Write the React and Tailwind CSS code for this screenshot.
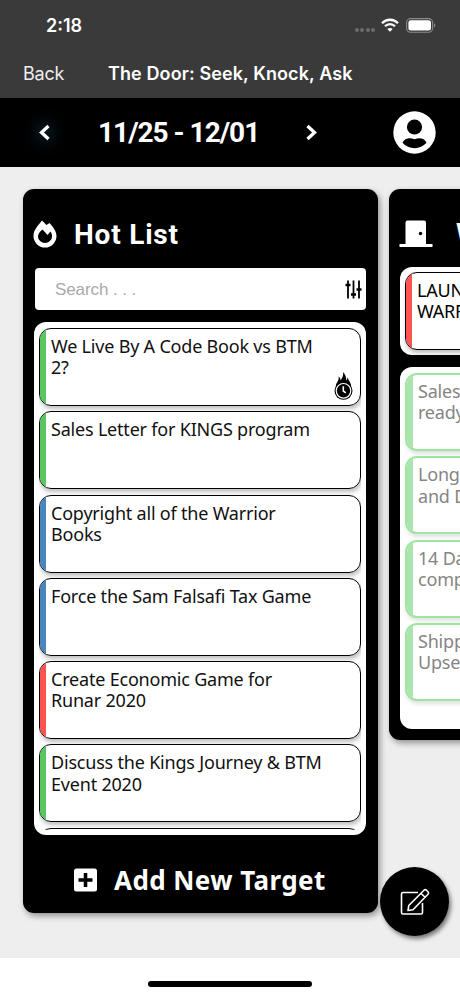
const targets = [
  { title: "We Live By A Code Book vs BTM 2?", color: "green", hot: true },
  { title: "Sales Letter for KINGS program", color: "green" },
  { title: "Copyright all of the Warrior Books", color: "blue" },
  { title: "Force the Sam Falsafi Tax Game", color: "blue" },
  { title: "Create Economic Game for Runar 2020", color: "red" },
  { title: "Discuss the Kings Journey & BTM Event 2020", color: "green" },
  { title: "", color: "green" },
];

const doneTargets = [
  ["Sales", "ready"],
  ["Long", "and Da"],
  ["14 Day", "compl"],
  ["Shipp", "Upsell"],
];

const stripes = {
  green: "bg-[#5bc65f]",
  blue: "bg-[#4a86bd]",
  red: "bg-[#ff5350]",
};

function StatusBar() {
  return (
    <div className="flex h-[50px] items-center pl-[46px] pr-[24px] text-white">
      <span className="font-['Inter'] text-[18px] font-semibold">2:18</span>
      <div className="ml-auto flex gap-[1.5px] pt-[9px]">
        {[0, 1, 2, 3].map((n) => (
          <span key={n} className="h-[4px] w-[4px] rounded-full bg-[#6c6c6c]" />
        ))}
      </div>
      <svg className="ml-[6px]" width="18" height="14" viewBox="0 0 18 14" fill="none" stroke="#fff" strokeWidth="2.3">
        <path d="M1 5.2C5.4.6 12.6.6 17 5.2" />
        <path d="M4 8.3c2.8-2.9 7.2-2.9 10 0" />
        <path d="M9 13.7 6.3 11c1.5-1.5 3.9-1.5 5.4 0z" fill="#fff" stroke="none" />
      </svg>
      <svg className="ml-[7px]" width="30" height="15" viewBox="0 0 30 15">
        <rect x="0.6" y="0.6" width="26" height="13.6" rx="4" fill="none" stroke="#8c8c8c" strokeWidth="1.1" />
        <rect x="2.4" y="2.3" width="22.6" height="10.2" rx="2.5" fill="#fff" />
        <path d="M28 5.2c1.7.8 1.7 3.6 0 4.4z" fill="#8c8c8c" />
      </svg>
    </div>
  );
}

function HotTimer() {
  return (
    <svg className="absolute right-[7px] bottom-[5px]" width="19" height="28" viewBox="0 0 19 28">
      <path d="M2 15C.8 11.5 5.5 9.5 4.6 4.5c1.3 1 1.9 2.3 2 4C8.3 6 9.7 3.5 9 0c2.5 2.5 3.3 5 3.3 8.5.8-.8 1.3-2 1.2-3.5 1.2 4.5 4.2 6 3.5 10.5z" />
      <circle cx="9.5" cy="18.8" r="9" />
      <circle cx="9.5" cy="18.8" r="7.3" fill="none" stroke="#fff" strokeWidth="1.2" />
      <path d="M9.3 14.2v4.8l2.5 1.8" fill="none" stroke="#fff" strokeWidth="1.6" />
    </svg>
  );
}

function Target({ title, color, hot }) {
  return (
    <div className="relative flex h-[78px] shrink-0 overflow-hidden rounded-[12px] border border-black bg-white">
      <div className={`w-[6px] shrink-0 ${stripes[color]}`} />
      <p className="w-[279px] pt-[7px] pl-[5px] text-[18px] leading-[21.3px] tracking-[-0.2px] text-[#111]">{title}</p>
      {hot && <HotTimer />}
    </div>
  );
}

function Header() {
  return (
    <header className="flex h-[69px] items-center bg-black pl-[38px] pr-[24px] text-white">
      <svg className="drop-shadow-[0_0_8px_#1687c8]" width="13" height="17" viewBox="0 0 13 17" fill="none" stroke="#fff" strokeWidth="3.3">
        <path d="m10.500 2-7 6.500 7 6.500" />
      </svg>
      <h1 className="ml-[47px] w-[162px] font-['Roboto'] text-[28px] leading-none font-bold tracking-[-1px] whitespace-nowrap">11/25 - 12/01</h1>
      <svg className="ml-[45px]" width="13" height="17" viewBox="0 0 13 17" fill="none" stroke="#fff" strokeWidth="3.3">
        <path d="m2.500 2 7 6.500-7 6.500" />
      </svg>
      <svg className="ml-auto" width="43" height="43" viewBox="0 0 43 43">
        <circle cx="21.5" cy="21.5" r="21.2" fill="#fff" />
        <circle cx="21.5" cy="16" r="7.6" />
        <path d="M9.500 31.800c2-4.500 7-5.500 12-3.500 5-2 10-1 12 3.500-6 7.200-18 7.200-24 0z" />
      </svg>
    </header>
  );
}

export default function App() {
  return (
    <div className="relative h-[996px] w-[460px] overflow-hidden bg-white font-['Noto_Sans',sans-serif]">
      <div className="h-[98px] bg-[#3a3a3a]">
        <StatusBar />
        <div className="flex h-[47px] items-center pl-[23px] font-['Inter'] text-[18px] text-white">
          <span className="w-[85px] tracking-[-0.2px] text-[#eee]">Back</span>
          <span className="font-semibold tracking-[0.1px] whitespace-nowrap">The Door: Seek, Knock, Ask</span>
        </div>
      </div>
      <Header />

      <main className="flex h-[791px] items-start gap-[11px] overflow-hidden bg-[#eee] pt-[22px] pl-[23px]">
        <section className="h-[724px] w-[355px] shrink-0 rounded-[11px] bg-black px-[11px] shadow-[2px_3px_6px_rgba(0,0,0,0.4)]">
          <div className="flex h-[79px] items-center pt-[10px] text-white">
            <svg className="-ml-px" width="24" height="28" viewBox="0 0 24 28">
              <path fill="#fff" fillRule="evenodd" d="M9 .5 13.500 5 16.500 3C20 7 23.500 11 23.500 16a11.500 11.500 0 0 1-23 0C.5 9.500 5 6 9 .5zM9.500 9.500C6.500 12 5 14 5 16.500a7 6.500 0 0 0 14 0c0-2-.5-3.500-1.500-5l-3 3.500z" />
            </svg>
            <h2 className="ml-[17px] pt-[2px] font-['Roboto'] text-[28px] leading-none font-bold tracking-[0.8px]">Hot List</h2>
          </div>
          <div className="mx-[1px] flex h-[42px] items-center justify-between rounded-[4px] bg-white pr-[4px] pl-[20px]">
            <span className="pt-[2px] font-['Liberation_Sans'] text-[17px] tracking-[-0.1px] text-[#a9a9a9]">Search . . .</span>
            <svg width="17" height="19" viewBox="0 0 17 19" fill="none" stroke="#000" strokeWidth="1.8">
              <path d="M3 .5v18M8.500.5v18M14 .5v18" />
              <path d="M.5 5h5M6 14.500h5M11.500 9.500h5" strokeWidth="2.3" />
            </svg>
          </div>
          <div className="mt-[12px] h-[513px] w-[332px] rounded-[12px] bg-white px-[5px] pt-[6px]">
            <div className="flex h-[502px] flex-col gap-[5.3px] overflow-hidden">
              {targets.map((t, i) => (
                <div key={i} className="rounded-[12px] shadow-[1px_3px_4px_rgba(0,0,0,0.25)]">
                  <Target {...t} />
                </div>
              ))}
            </div>
          </div>
          <div className="flex h-[78px] items-center pt-[12px] pl-[40px] text-white">
            <svg width="24" height="24" viewBox="0 0 24 24">
              <rect x="0" y="0.5" width="23" height="23" rx="2.5" fill="#fff" />
              <path d="M11.500 5v14M4.500 12h14" stroke="#000" strokeWidth="3.6" />
            </svg>
            <span className="ml-[16px] text-[26px] leading-none font-bold tracking-[0.42px] whitespace-nowrap">Add New Target</span>
          </div>
        </section>

        <section className="h-[551px] w-[355px] shrink-0 rounded-[11px] bg-black px-[11px] shadow-[2px_3px_6px_rgba(0,0,0,0.4)]">
          <div className="flex h-[78px] items-center pt-[10px] text-white">
            <svg className="-ml-px" width="34" height="27" viewBox="0 0 34 27">
              <path d="M6.500 24V2.500a2 2 0 0 1 2-2H25a2 2 0 0 1 2 2V24h6.500v3H.5v-3z" fill="#fff" />
              <circle cx="21.5" cy="13.5" r="1.7" />
            </svg>
            <h2 className="ml-[23px] pt-[2px] font-['Roboto'] text-[28px] leading-none font-bold">W</h2>
          </div>
          <div className="h-[88px] rounded-[12px] bg-white px-[5px] pt-[5px]">
            <div className="flex h-[78px] overflow-hidden rounded-[12px] border border-black bg-white shadow-[1px_3px_4px_rgba(0,0,0,0.25)]">
              <div className="w-[6px] bg-[#ff5350]" />
              <p className="pt-[7px] pl-[5px] text-[18px] leading-[21.3px] tracking-[-0.2px]">LAUNCH<br />WARRIOR</p>
            </div>
          </div>
          <div className="mt-[12px] flex h-[362px] flex-col gap-[5.3px] rounded-[12px] bg-white px-[5px] pt-[6px]">
            {doneTargets.map(([first, second]) => (
              <div key={first} className="flex h-[78px] overflow-hidden rounded-[12px] border-2 border-[#9ce69e] bg-white shadow-[1px_3px_4px_rgba(0,0,0,0.12)]">
                <div className="w-[6px] bg-[#ade3af]" />
                <p className="pt-[6px] pl-[5px] text-[18px] leading-[21.3px] tracking-[-0.2px] text-[#858585]">{first}<br />{second}</p>
              </div>
            ))}
          </div>
        </section>
      </main>

      <footer className="flex h-[38px] justify-center pt-[23px]">
        <div className="h-[6px] w-[164px] rounded-full bg-black" />
      </footer>

      <button className="absolute top-[867px] left-[380px] flex h-[69px] w-[69px] items-center justify-center rounded-full bg-black shadow-[2px_3px_4px_rgba(0,0,0,0.5)]">
        <svg width="30" height="28" viewBox="0 0 30 28" fill="none" stroke="#fff" strokeWidth="1.6" strokeLinejoin="round">
          <path d="M18 4.500H3a1.500 1.500 0 0 0-1.500 1.500v18.500A1.500 1.500 0 0 0 3 26h18a1.500 1.500 0 0 0 1.500-1.500V15" />
          <path d="m8 22.500.8-5L24 2.200q1.200-1 2.400 0l1.600 1.600q1 1.200 0 2.400L13 21.700zM21 5.200l4 4" />
        </svg>
      </button>
    </div>
  );
}
